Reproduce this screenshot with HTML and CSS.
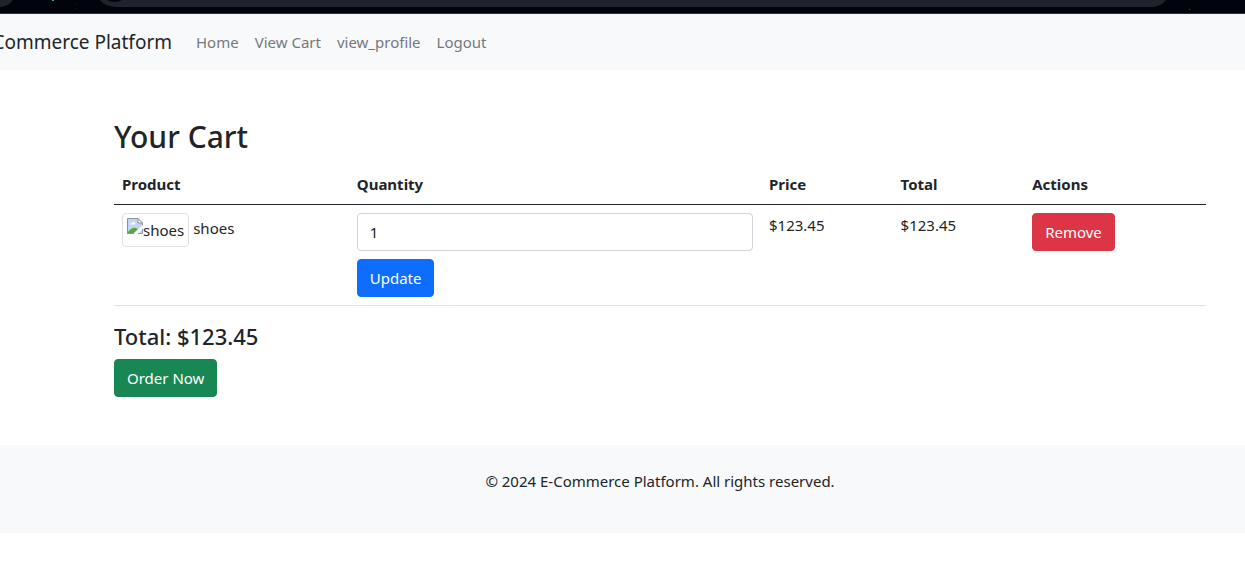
FILE: index.html
```html
<!DOCTYPE html>
<html lang="en">
<head>
<meta charset="utf-8">
<meta name="viewport" content="width=device-width, initial-scale=1">
<title>Your Cart</title>
<link rel="stylesheet" href="styles.css">
</head>
<body>
<div class="chrome" aria-hidden="true">
  <svg class="chrome-left" width="200" height="13" viewBox="0 0 200 13">
    <path d="M0 0H13Q9 6 0 7Z" fill="#20232b"/>
    <path d="M100 0Q105 7 117 7H200V0Z" fill="#20232b"/>
    <path d="M107 0Q115 4 122 0Z" fill="#02040d"/>
    <path d="M52 0h2v1h-2z" fill="#2fa89d"/>
    <path d="M75 3h1v1h-1zM76 8h1v1h-1z" fill="#20242c"/>
  </svg>
  <div class="chrome-bar"></div>
  <svg class="chrome-right" width="97" height="13" viewBox="0 0 97 13">
    <path d="M0 0H18Q13 7 3 7H0Z" fill="#20232b"/>
    <path d="M41 9h1v1h-1z" fill="#4a4e58"/>
  </svg>
</div>
<nav class="navbar">
  <a class="brand" href="#">Commerce Platform</a>
  <ul class="nav-list">
    <li><a class="nav-link" href="#">Home</a></li>
    <li><a class="nav-link" href="#">View Cart</a></li>
    <li><a class="nav-link" href="#">view_profile</a></li>
    <li><a class="nav-link" href="#">Logout</a></li>
  </ul>
</nav>
<main class="cart">
  <h2 class="title">Your Cart</h2>
  <table class="table">
    <colgroup>
      <col class="col-product"><col class="col-quantity"><col class="col-price"><col class="col-total"><col>
    </colgroup>
    <thead>
      <tr><th>Product</th><th>Quantity</th><th>Price</th><th>Total</th><th>Actions</th></tr>
    </thead>
    <tbody>
      <tr>
        <td>
          <div class="product">
            <span class="thumb">
              <svg class="thumb-icon" width="16" height="16" viewBox="0 0 16 16" aria-hidden="true">
                <path d="M.5 .5H11L15.5 5V15.5H.5Z" fill="#c3d5f4"/>
                <path d="M3 6.5Q3 5 5 5Q6 3 8 4.500Q9 6.500 7 6.500Z" fill="#fff"/>
                <path d="M1 15V14Q5 9 9 10L11 11L7 15Z" fill="#57a83c"/>
                <path d="M.5 16V.5H11L15.500 5V9" fill="none" stroke="#8d9299"/>
                <path d="M11 .5V5H15.500Z" fill="#fff" stroke="#8d9299"/>
                <path d="M6 16L16 7V11L11 16Z" fill="#fff"/>
                <path d="M0 15.500H7M11 15.500H15.500V11" fill="none" stroke="#8d9299"/>
              </svg>
              <span>shoes</span>
            </span>
            <span>shoes</span>
          </div>
        </td>
        <td>
          <form class="quantity-form">
            <input class="field" type="text" inputmode="numeric" value="1" aria-label="Quantity">
            <button class="btn btn-primary" type="button">Update</button>
          </form>
        </td>
        <td>$123.45</td>
        <td>$123.45</td>
        <td><button class="btn btn-danger" type="button">Remove</button></td>
      </tr>
    </tbody>
  </table>
  <h4 class="sum">Total: $123.45</h4>
  <button class="btn btn-success" type="button">Order Now</button>
</main>
<footer class="footer">
  <p class="copyright">© 2024 E-Commerce Platform. All rights reserved.</p>
</footer>
</body>
</html>
```

FILE: styles.css
```css
* { box-sizing: border-box; }

body {
  margin: 0;
  background: #fff;
  color: #212529;
  font-family: "Noto Sans", "Open Sans", sans-serif;
  font-size: 15px;
  line-height: 24px;
}

.chrome {
  display: flex;
  background: #02040d;
  border-bottom: 1px solid #2f313c;
}
.chrome-left, .chrome-right { display: block; flex: none; }
.chrome-bar { flex: 1; height: 7px; background: #20232b; }

.navbar {
  display: flex;
  align-items: center;
  gap: 16px;
  padding: 8px 0;
  background: #f8f9fb;
}
.brand {
  display: flex;
  justify-content: flex-end;
  width: 172px;
  color: #212529;
  font-size: 19px;
  line-height: 30px;
  white-space: nowrap;
  text-decoration: none;
}
.nav-list {
  display: flex;
  margin: 0;
  padding: 0;
  list-style: none;
}
.nav-link {
  display: block;
  padding: 8px;
  color: #75787b;
  text-decoration: none;
}

.cart { padding: 48px 39px 48px 114px; }
.title {
  margin: 0 0 8px;
  font-size: 30px;
  line-height: 38px;
  font-weight: 500;
}

.table {
  width: 100%;
  margin: 0 0 16px;
  border-collapse: collapse;
  table-layout: fixed;
}
.col-product { width: 21.5%; }
.col-quantity { width: 37.75%; }
.col-price, .col-total { width: 12.05%; }
.table th, .table td {
  padding: 8px;
  text-align: left;
  vertical-align: top;
}
.table th {
  border-bottom: 1px solid #212529;
  font-weight: 700;
}
.table td { border-bottom: 1px solid #dee2e6; }

.product {
  display: flex;
  align-items: baseline;
  gap: 4px;
}
.thumb {
  display: flex;
  align-items: flex-start;
  padding: 4px;
  border: 1px solid #dee2e6;
  border-radius: 4px;
}
.thumb-icon { flex: none; }

.quantity-form {
  display: flex;
  flex-direction: column;
  align-items: flex-start;
  gap: 8px;
}
.field {
  width: 100%;
  padding: 6px 12px;
  border: 1px solid #ced4da;
  border-radius: 4px;
  background: #fff;
  color: #212529;
  font: inherit;
}
.btn {
  display: block;
  padding: 6px 12px;
  border: 1px solid transparent;
  border-radius: 4px;
  color: #fff;
  font: inherit;
  cursor: pointer;
}
.btn-primary { background: #0d6efd; border-color: #0d6efd; }
.btn-danger { background: #dc3545; border-color: #dc3545; }
.btn-success { background: #198754; border-color: #198754; }

.sum {
  margin: 0 0 8px;
  font-size: 22px;
  line-height: 29px;
  font-weight: 500;
}

.footer {
  padding: 24px 0 24px 75px;
  background: #f8f9fb;
  text-align: center;
}
.copyright { margin: 0 0 16px; }
```
